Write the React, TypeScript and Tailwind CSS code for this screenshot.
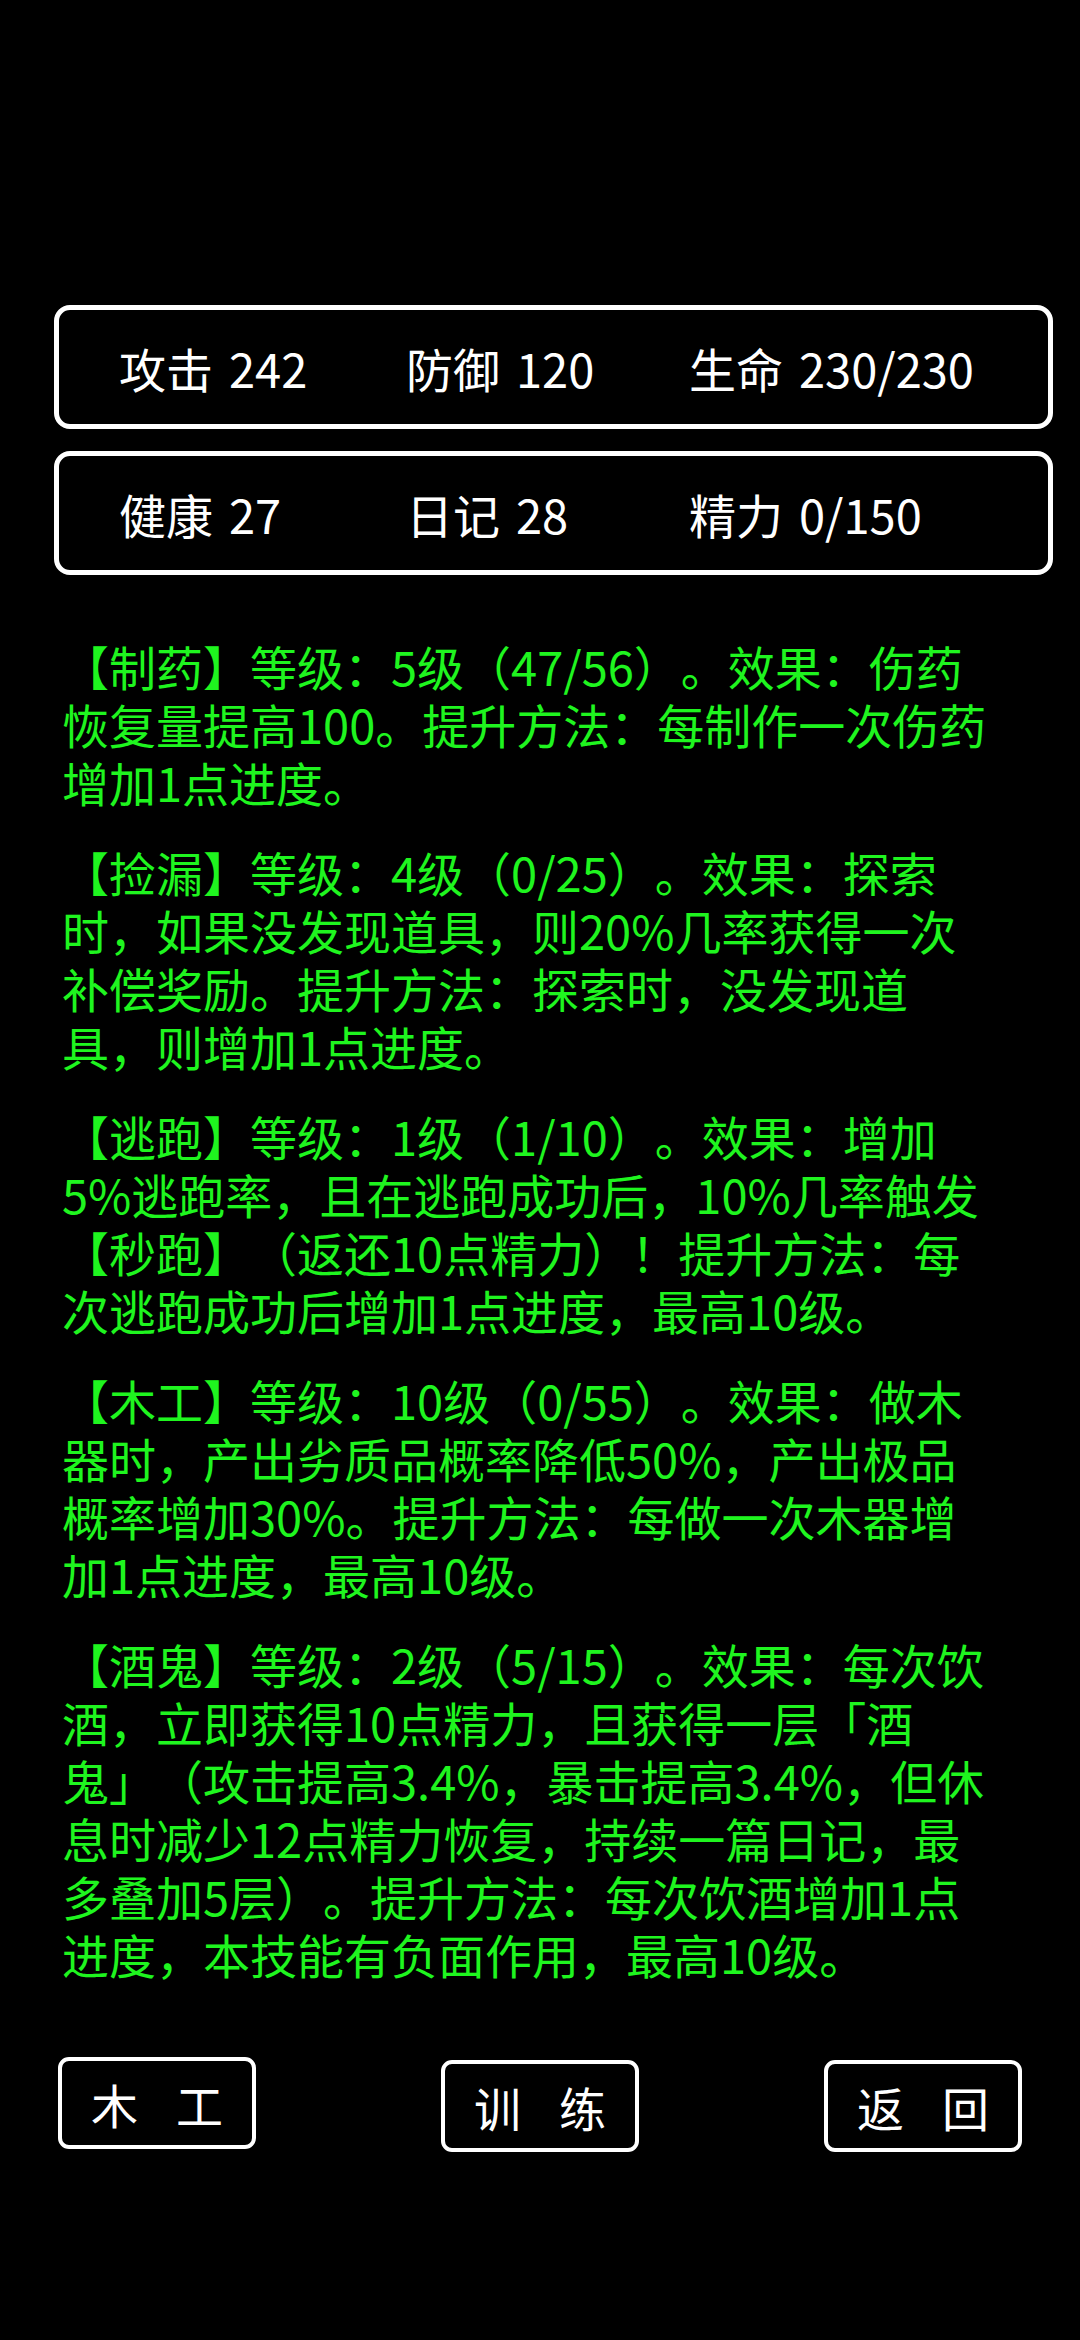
import React from "react";

const blocks: string[][] = [
  [
    "【制药】等级：5级（47/56）。效果：伤药",
    "恢复量提高100。提升方法：每制作一次伤药",
    "增加1点进度。",
  ],
  [
    "【捡漏】等级：4级（0/25）。效果：探索",
    "时，如果没发现道具，则20%几率获得一次",
    "补偿奖励。提升方法：探索时，没发现道",
    "具，则增加1点进度。",
  ],
  [
    "【逃跑】等级：1级（1/10）。效果：增加",
    "5%逃跑率，且在逃跑成功后，10%几率触发",
    "【秒跑】（返还10点精力）！提升方法：每",
    "次逃跑成功后增加1点进度，最高10级。",
  ],
  [
    "【木工】等级：10级（0/55）。效果：做木",
    "器时，产出劣质品概率降低50%，产出极品",
    "概率增加30%。提升方法：每做一次木器增",
    "加1点进度，最高10级。",
  ],
  [
    "【酒鬼】等级：2级（5/15）。效果：每次饮",
    "酒，立即获得10点精力，且获得一层「酒",
    "鬼」（攻击提高3.4%，暴击提高3.4%，但休",
    "息时减少12点精力恢复，持续一篇日记，最",
    "多叠加5层）。提升方法：每次饮酒增加1点",
    "进度，本技能有负面作用，最高10级。",
  ],
];

function Stat({ label, value }: { label: string; value: string }) {
  return (
    <div className="flex items-center gap-[16px]">
      <span>{label}</span>
      <span>{value}</span>
    </div>
  );
}

function StatBox({ items }: { items: [string, string][] }) {
  return (
    <div className="ml-[54px] w-[999px] h-[124px] rounded-[16px] border-[5px] border-white grid grid-cols-[287px_283px_1fr] items-center pl-[60px] text-white text-[47px] leading-none">
      {items.map(([l, v]) => (
        <Stat key={l} label={l} value={v} />
      ))}
    </div>
  );
}

function Btn({ a, b, extra }: { a: string; b: string; extra?: string }) {
  return (
    <div
      className={
        "w-[198px] h-[92px] rounded-[11px] border-[4px] border-white flex items-center justify-center gap-[38px] text-white text-[47px] leading-none " +
        (extra ?? "")
      }
    >
      <span>{a}</span>
      <span>{b}</span>
    </div>
  );
}

export default function App() {
  return (
    <div
      className="w-[1080px] h-[2340px] bg-black overflow-hidden [text-spacing-trim:space-all]"
      style={{ fontFamily: '"Noto Sans CJK SC", "Noto Sans", sans-serif' }}
    >
      <div className="pt-[305px] flex flex-col gap-[22px]">
        <StatBox
          items={[
            ["攻击", "242"],
            ["防御", "120"],
            ["生命", "230/230"],
          ]}
        />
        <StatBox
          items={[
            ["健康", "27"],
            ["日记", "28"],
            ["精力", "0/150"],
          ]}
        />
      </div>

      <div className="mt-[62px] pl-[62px] flex flex-col gap-[32px] text-[#1ff51f] text-[47px] leading-[58px]">
        {blocks.map((lines, i) => (
          <div key={i}>
            {lines.map((ln, j) => (
              <div key={j} className="whitespace-nowrap">
                {ln}
              </div>
            ))}
          </div>
        ))}
      </div>

      <div className="mt-[74px] px-[58px] flex items-start justify-between">
        <Btn a="木" b="工" />
        <Btn a="训" b="练" extra="mt-[3px]" />
        <Btn a="返" b="回" extra="mt-[3px]" />
      </div>
    </div>
  );
}
